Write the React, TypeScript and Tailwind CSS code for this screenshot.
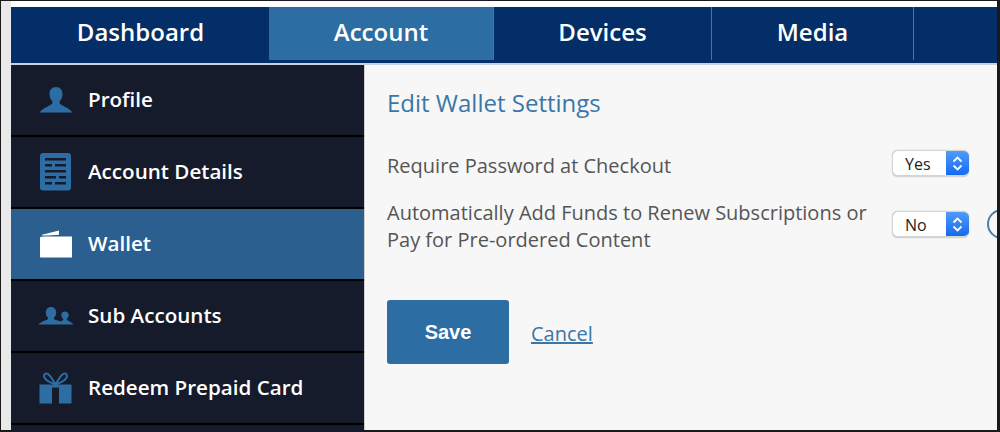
import React from 'react';

const Sel = ({ label }: { label: string }) => (
  <div className="flex h-[27px] w-[77px] shrink-0 translate-y-[1px] overflow-hidden rounded-[6px] border-b-2 border-l border-t border-[#d4d4d4] bg-white shadow-[0_0_1px_#aaa]">
    <span className="flex-1 pl-[12px] pt-[1px] text-[16px] leading-[24px] text-[#222]">{label}</span>
    <span className="flex w-[23px] items-center justify-center bg-gradient-to-b from-[#4f9bfb] to-[#1469f0]">
      <svg width="11" height="17" viewBox="0 0 11 17" fill="none" stroke="white" strokeWidth="1.8">
        <path d="M1.5 6.5 5.5 2.5 9.5 6.5M1.5 10.5 5.5 14.5 9.5 10.5" />
      </svg>
    </span>
  </div>
);

const ProfileIcon = () => (
  <svg width="34" height="26" viewBox="0 0 34 26" fill="#2c6ea3">
    <path d="M17 0c-4.300 0-6.500 3-6.500 7 0 3 1.100 5.500 2.800 7.200v2.300C12 18.500 5 20 0.500 25.500h33C29 20 22 18.500 20.700 16.500v-2.300C22.400 12.500 23.500 10 23.500 7c0-4-2.200-7-6.500-7z" />
  </svg>
);

const DetailsIcon = () => (
  <svg width="32" height="38" viewBox="0 0 32 38">
    <rect width="31" height="37.500" rx="3" fill="#2c6ea3" />
    <g fill="#161b2b">
      <rect x="5" y="5" width="21" height="2.500" />
      <rect x="5" y="11" width="7" height="2.500" />
      <rect x="15" y="11" width="11" height="2.500" />
      <rect x="5" y="17" width="21" height="2.500" />
      <rect x="5" y="23" width="11" height="2.500" />
      <rect x="19" y="23" width="7" height="2.500" />
      <rect x="5" y="29" width="7" height="2.500" />
      <rect x="15" y="29" width="11" height="2.500" />
    </g>
  </svg>
);

const WalletIcon = () => (
  <svg width="34" height="28" viewBox="0 0 34 28" fill="white">
    <path d="M1 8C1 7.300 1.500 6.800 2 6.700L6 6.500H33V27.500H2C1.400 27.500 1 27 1 26.500Z" />
    <path d="M3 4.800 20 0.500V4.800L9 5.400 3 5.600Z" />
  </svg>
);

const SubIcon = () => (
  <svg width="36" height="18" viewBox="0 0 36 18" fill="#2c6ea3">
    <path d="M13 0C9.800 0 7.800 2.400 7.800 5.500 7.800 7.800 8.700 9.500 10 10.800V12C8.500 13.500 3.500 14 .5 17.500H35.500C33 14.800 30.500 14.200 28.800 13V11.800C30 10.800 30.800 9.300 30.800 8 30.800 6 29 4.500 27 4.500 25 4.500 23.300 6 23.300 8 23.300 9.300 24 10.800 25.200 11.800V13L22.800 14.500C20 13.500 17 13 16 12V10.800C17.300 9.500 18.200 7.800 18.200 5.500 18.200 2.400 16.200 0 13 0Z" />
  </svg>
);

const GiftIcon = () => (
  <svg width="33" height="32" viewBox="0 0 33 32">
    <path d="M0.500 12.500H32.500V31.500H20V15.500H13V31.500H.5Z" fill="#2c6ea3" />
    <path d="M16.500 12.500C14 8 11.500 4 9 2 6.500 .5 4.500 2.500 5.200 5 6.200 8 10.500 10.500 16.500 12.500 19 8 21.500 4 24 2 26.500 .5 28.500 2.500 27.800 5 26.800 8 22.500 10.500 16.500 12.500Z" fill="none" stroke="#2c6ea3" strokeWidth="2" />
  </svg>
);

const items = [
  { label: 'Profile', icon: <ProfileIcon /> },
  { label: 'Account Details', icon: <DetailsIcon /> },
  { label: 'Wallet', icon: <WalletIcon />, active: true },
  { label: 'Sub Accounts', icon: <SubIcon /> },
  { label: 'Redeem Prepaid Card', icon: <GiftIcon /> },
];

const tabs = [
  { label: 'Dashboard', w: 'w-[257px]' },
  { label: 'Account', w: 'w-[225px]', active: true },
  { label: 'Devices', w: 'w-[218px]' },
  { label: 'Media', w: 'w-[202px]' },
  { label: '', w: 'flex-1' },
];

export default function App() {
  return (
    <div className="h-[432px] w-[1000px] overflow-hidden bg-[#e9e9e9] font-['Open_Sans',sans-serif]">
      <div className="h-full border-b-[2px] border-l border-r-[3px] border-t border-[#1a1a1a] pl-[10px]">
        <div className="h-[6px] bg-white" />
        <div className="flex h-[56px] border-b-[3px] border-l border-[#032e67] bg-[#032e67]">
          {tabs.map((t, i) => (
            <div
              key={i}
              className={`${t.w} flex items-center justify-center pb-[3px] text-[24px] font-semibold text-white ${t.active ? 'bg-[#2c6ea3]' : ''} ${i === 0 || i === 4 ? '' : 'border-r border-[#4a74a3]'}`}
            >
              {t.label}
            </div>
          ))}
        </div>
        <div className="flex h-[367px] border-t-[2px] border-[#c4d2df]">
          <div className="w-[353px] shrink-0 bg-black">
            {items.map(it => (
              <div key={it.label} className={`mb-[2px] flex h-[70px] items-center ${it.active ? 'bg-[#2a5f90]' : 'bg-[#161b2b]'}`}>
                <div className="flex w-[77px] justify-center pl-[13px] pr-[1px]">{it.icon}</div>
                <span className="pb-[2px] text-[20.600px] font-semibold leading-none text-white">{it.label}</span>
              </div>
            ))}
            <div className="h-[6px] bg-[#161b2b]" />
          </div>
          <div className="flex-1 overflow-hidden border-l border-[#cfcfcf] bg-[#f7f7f7] pl-[22px] pt-[22px]">
            <h1 className="text-[24px] font-normal leading-[32px] text-[#3a76a8]">Edit Wallet Settings</h1>
            <div className="mt-[30px] flex h-[27px] items-center">
              <span className="w-[505px] shrink-0 pt-[7px] text-[20px] text-[#555]">Require Password at Checkout</span>
              <Sel label="Yes" />
            </div>
            <div className="mt-[18px] flex items-center">
              <span className="w-[505px] shrink-0 pt-[5px] text-[20px] leading-[27px] text-[#555]">
                Automatically Add Funds to Renew Subscriptions or
                <br />
                Pay for Pre-ordered Content
              </span>
              <Sel label="No" />
              <span className="ml-[18px] h-[30px] w-[30px] shrink-0 rounded-full border-2 border-[#4a7fa8]" />
            </div>
            <div className="mt-[47px] flex items-center">
              <button className="h-[64px] w-[122px] rounded-[3px] bg-[#2c6ea3] font-['Liberation_Sans',sans-serif] text-[20px] font-bold text-white">Save</button>
              <a className="ml-[22px] pt-[3px] text-[20px] text-[#3a76a8] underline">Cancel</a>
            </div>
          </div>
        </div>
      </div>
    </div>
  );
}
